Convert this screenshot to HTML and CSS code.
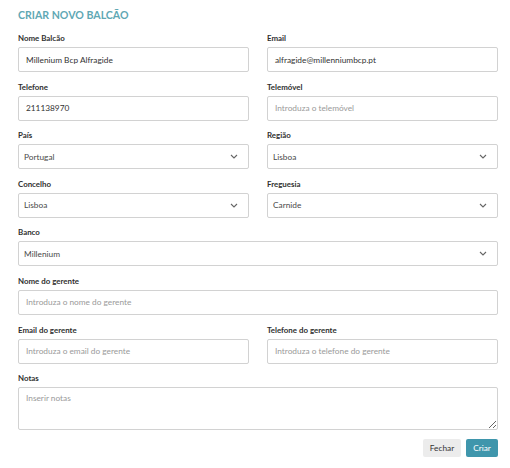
FILE: index.html
```html
<!DOCTYPE html>
<html lang="pt">
<head>
<meta charset="utf-8">
<title>Criar novo balcão</title>
<link rel="stylesheet" href="styles.css">
</head>
<body>
<form class="modal">
  <h1 class="modal-title">CRIAR NOVO BALCÃO</h1>

  <div class="grid">
    <div class="field">
      <label class="field-label">Nome Balcão</label>
      <div class="control">Millenium Bcp Alfragide</div>
    </div>
    <div class="field">
      <label class="field-label">Email</label>
      <div class="control">alfragide@millenniumbcp.pt</div>
    </div>

    <div class="field">
      <label class="field-label">Telefone</label>
      <div class="control">211138970</div>
    </div>
    <div class="field">
      <label class="field-label">Telemóvel</label>
      <div class="control placeholder">Introduza o telemóvel</div>
    </div>

    <div class="field">
      <label class="field-label">País</label>
      <div class="control select"><span>Portugal</span><svg class="chevron" viewBox="0 0 8 5"><polyline points="1,1 4,4 7,1"/></svg></div>
    </div>
    <div class="field">
      <label class="field-label">Região</label>
      <div class="control select"><span>Lisboa</span><svg class="chevron" viewBox="0 0 8 5"><polyline points="1,1 4,4 7,1"/></svg></div>
    </div>

    <div class="field">
      <label class="field-label">Concelho</label>
      <div class="control select"><span>Lisboa</span><svg class="chevron" viewBox="0 0 8 5"><polyline points="1,1 4,4 7,1"/></svg></div>
    </div>
    <div class="field">
      <label class="field-label">Freguesia</label>
      <div class="control select"><span>Carnide</span><svg class="chevron" viewBox="0 0 8 5"><polyline points="1,1 4,4 7,1"/></svg></div>
    </div>

    <div class="field wide">
      <label class="field-label">Banco</label>
      <div class="control select"><span>Millenium</span><svg class="chevron" viewBox="0 0 8 5"><polyline points="1,1 4,4 7,1"/></svg></div>
    </div>

    <div class="field wide">
      <label class="field-label">Nome do gerente</label>
      <div class="control placeholder">Introduza o nome do gerente</div>
    </div>

    <div class="field">
      <label class="field-label">Email do gerente</label>
      <div class="control placeholder">Introduza o email do gerente</div>
    </div>
    <div class="field">
      <label class="field-label">Telefone do gerente</label>
      <div class="control placeholder">Introduza o telefone do gerente</div>
    </div>

    <div class="field wide">
      <label class="field-label">Notas</label>
      <textarea class="notes" placeholder="Inserir notas"></textarea>
    </div>
  </div>

  <div class="actions">
    <button type="button" class="btn btn-light">Fechar</button>
    <button type="button" class="btn btn-primary">Criar</button>
  </div>
</form>
</body>
</html>
```
FILE: styles.css
```css
* {
  box-sizing: border-box;
}

html, body {
  margin: 0;
  background: #ffffff;
}

body {
  font-family: Lato, "Open Sans", sans-serif;
  color: #333333;
}

.modal {
  display: flex;
  flex-direction: column;
  padding: 7px 12px 0 18px;
  width: 510px;
}

.modal-title {
  margin: 0 0 9px;
  font-size: 10.6px;
  line-height: 16px;
  font-weight: 700;
  color: #5fa8b4;
  letter-spacing: 0;
}

.grid {
  display: grid;
  grid-template-columns: 231px 231px;
  column-gap: 18px;
  row-gap: 8.6px;
}

.field {
  display: flex;
  flex-direction: column;
}

.field.wide {
  grid-column: 1 / -1;
}

.field-label {
  font-size: 7.9px;
  line-height: 12px;
  font-weight: 700;
  color: #2f2f2f;
  margin-bottom: 3px;
}

.control {
  height: 25px;
  border: 1px solid #d2d2d2;
  border-radius: 2px;
  padding: 0 7px;
  display: flex;
  align-items: center;
  font-size: 8.3px;
  color: #333333;
  background: #ffffff;
}

.control.placeholder {
  color: #9a9a9a;
}

.control.select {
  justify-content: space-between;
  padding: 0 10px 0 5px;
  color: #4a4a4a;
}

.chevron {
  width: 8px;
  height: 5px;
  fill: none;
  stroke: #666666;
  stroke-width: 1.1;
}

.notes {
  height: 43px;
  border: 1px solid #d2d2d2;
  border-radius: 2px;
  padding: 5px 7px;
  font-family: inherit;
  font-size: 8.3px;
  color: #333333;
  resize: vertical;
  outline: none;
}

.notes::placeholder {
  color: #9a9a9a;
}

.actions {
  display: flex;
  justify-content: flex-end;
  gap: 5px;
  margin-top: 9px;
}

.btn {
  height: 18px;
  border: none;
  border-radius: 2px;
  padding: 0 6px;
  font-family: inherit;
  font-size: 8.3px;
}

.btn-light {
  background: #ececec;
  color: #333333;
  width: 38px;
}

.btn-primary {
  background: #3f96ac;
  color: #ffffff;
  width: 32px;
}
```
